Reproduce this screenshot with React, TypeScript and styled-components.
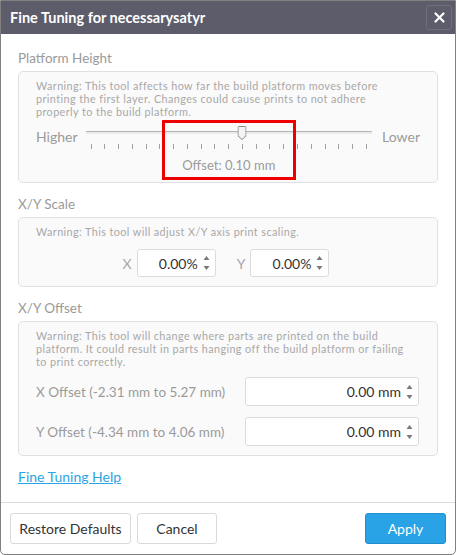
import React, {FC} from "react";
import styled, {createGlobalStyle} from "styled-components";

const GlobalStyle = createGlobalStyle`
    html, body {
        margin: 0;
        padding: 0;
        background: #ffffff;
    }
    body {
        font-family: Lato, "Open Sans", sans-serif;
    }
`;

const Modal = styled.div`
    width: 456px;
    height: 555px;
    box-sizing: border-box;
    border: 1px solid #808080;
    border-radius: 0 0 5px 5px;
    display: flex;
    flex-direction: column;
    overflow: hidden;
    background: #ffffff;
`;

const Header = styled.div`
    height: 33px;
    flex-shrink: 0;
    background: #5c5c6a;
    display: flex;
    align-items: center;
    justify-content: space-between;
    padding: 0 3px 0 9px;
`;

const Title = styled.h1`
    margin: 0;
    font-size: 14.5px;
    font-weight: 700;
    color: #ffffff;
`;

const CloseButton = styled.button`
    width: 26px;
    height: 25px;
    border: 1px solid #6f6f7d;
    border-radius: 3px;
    background: #5c5c6a;
    color: #ffffff;
    display: flex;
    align-items: center;
    justify-content: center;
    padding: 0;
`;

const Body = styled.div`
    flex: 1;
    padding: 16px 17px 0 17px;
`;

const SectionLabel = styled.div<{ $first?: boolean }>`
    font-size: 13.5px;
    line-height: 16px;
    color: #9a9a9a;
    margin-top: ${p => (p.$first ? 0 : 13)}px;
    margin-bottom: 5px;
`;

const Panel = styled.div<{ $right?: number }>`
    border: 1px solid #e0e0e0;
    border-radius: 5px;
    background: #fafafa;
    padding: 7px ${p => p.$right ?? 17}px 9px 17px;
`;

const Warning = styled.div`
    font-size: 10.8px;
    line-height: 13px;
    letter-spacing: 0.42px;
    color: #a8a8a8;
    white-space: nowrap;
`;

const SliderRow = styled.div`
    display: flex;
    align-items: flex-start;
    margin-top: 8px;
`;

const EndLabel = styled.span`
    font-size: 14px;
    line-height: 22px;
    color: #9a9a9a;
`;

const SliderArea = styled.div`
    position: relative;
    flex: 1;
    margin: 0 10px 0 8px;
`;

const TrackBox = styled.div`
    position: relative;
    height: 12px;
`;

const Track = styled.div`
    position: absolute;
    left: 0;
    right: 0;
    top: 5px;
    height: 1px;
    background: #b5b5b5;
    border-bottom: 2px solid #ebebeb;
`;

const Thumb = styled.svg`
    position: absolute;
    top: 0;
    transform: translateX(-50%);
`;

const Ticks = styled.div`
    display: flex;
    justify-content: space-between;
    padding: 0 5px;
    margin-top: 6px;
`;

const Tick = styled.span`
    width: 1px;
    height: 5px;
    background: #a0a0a0;
`;

const OffsetText = styled.div`
    text-align: center;
    font-size: 13px;
    line-height: 16px;
    color: #9a9a9a;
    margin-top: 8px;
`;

const Highlight = styled.div`
    position: absolute;
    left: 76px;
    top: -6px;
    width: 134px;
    height: 60px;
    box-sizing: border-box;
    border: 3px solid #ee0000;
    pointer-events: none;
`;

const ScaleRow = styled.div`
    display: flex;
    justify-content: center;
    align-items: center;
    margin-top: 11px;
    padding-right: 4px;
`;

const AxisLabel = styled.span`
    font-size: 14px;
    color: #a8a8a8;
    margin: 0 5px 0 0;
`;

const Spin = styled.div<{ $w: number; $h: number }>`
    width: ${p => p.$w}px;
    height: ${p => p.$h}px;
    box-sizing: border-box;
    border: 1px solid #dcdcdc;
    border-radius: 3px;
    background: #ffffff;
    display: flex;
    align-items: center;
    justify-content: flex-end;
    padding-right: 5px;
    gap: 5px;
    font-size: 14px;
    color: #333333;
`;

const AxisGroup = styled.div`
    display: flex;
    align-items: center;
    & + & {
        margin-left: 21px;
    }
`;

const OffsetRow = styled.div`
    display: flex;
    align-items: center;
    justify-content: space-between;
    margin-top: 9px;
    & + & {
        margin-top: 11px;
    }
`;

const OffsetLabel = styled.span`
    font-size: 13.5px;
    color: #9a9a9a;
`;

const HelpLink = styled.a`
    display: inline-block;
    margin-top: 13px;
    font-size: 14px;
    line-height: 16px;
    color: #2aa5e4;
    text-decoration: underline;
`;

const Footer = styled.div`
    flex-shrink: 0;
    border-top: 1px solid #dcdcdc;
    padding: 10px 9px 10px 9px;
    display: flex;
    gap: 6px;
`;

const Button = styled.button<{ $w: number; $primary?: boolean }>`
    width: ${p => p.$w}px;
    height: 31px;
    border-radius: 3px;
    border: 1px solid ${p => (p.$primary ? "#1f8fce" : "#dadada")};
    background: ${p => (p.$primary ? "#29a3e6" : "#ffffff")};
    color: ${p => (p.$primary ? "#ffffff" : "#333333")};
    font-family: Lato, "Open Sans", sans-serif;
    font-size: 14px;
    padding: 0;
    margin-left: ${p => (p.$primary ? "auto" : "0")};
`;

const Arrows: FC = () => (
    <svg width="7" height="16" viewBox="0 0 7 16">
        <path d="M3.5 1 L6.5 5 L0.5 5 Z" fill="#7a7a7a"/>
        <path d="M3.5 15 L6.5 11 L0.5 11 Z" fill="#7a7a7a"/>
    </svg>
);

const SpinBox: FC<{ value: string; w: number; h: number }> = ({value, w, h}) => (
    <Spin $w={w} $h={h}>
        <span>{value}</span>
        <Arrows/>
    </Spin>
);

const TICKS = 21;
const THUMB_POS = 0.545;

const App: FC = () => (
    <>
        <GlobalStyle/>
        <Modal>
            <Header>
                <Title>Fine Tuning for necessarysatyr</Title>
                <CloseButton aria-label="Close">
                    <svg width="11" height="11" viewBox="0 0 11 11">
                        <path d="M1.5 1.5 L9.5 9.5 M9.5 1.5 L1.5 9.5" stroke="#ffffff" strokeWidth="2.2"
                              strokeLinecap="round"/>
                    </svg>
                </CloseButton>
            </Header>
            <Body>
                <SectionLabel $first>Platform Height</SectionLabel>
                <Panel>
                    <Warning>
                        Warning: This tool affects how far the build platform moves before<br/>
                        printing the first layer. Changes could cause prints to not adhere<br/>
                        properly to the build platform.
                    </Warning>
                    <SliderRow>
                        <EndLabel>Higher</EndLabel>
                        <SliderArea>
                            <TrackBox>
                                <Track/>
                                <Thumb width="9" height="14" viewBox="0 0 9 14" style={{left: `${THUMB_POS * 100}%`}}>
                                    <path d="M1.5 0.5 H7.5 Q8.5 0.5 8.5 1.5 V10 L4.5 13.5 L0.5 10 V1.5 Q0.5 0.5 1.5 0.5 Z"
                                          fill="#f4f4f4" stroke="#8a8a8a"/>
                                </Thumb>
                            </TrackBox>
                            <Ticks>
                                {Array.from({length: TICKS}).map((_, i) => <Tick key={i}/>)}
                            </Ticks>
                            <OffsetText>Offset: 0.10 mm</OffsetText>
                            <Highlight/>
                        </SliderArea>
                        <EndLabel>Lower</EndLabel>
                    </SliderRow>
                </Panel>

                <SectionLabel>X/Y Scale</SectionLabel>
                <Panel>
                    <Warning>Warning: This tool will adjust X/Y axis print scaling.</Warning>
                    <ScaleRow>
                        <AxisGroup>
                            <AxisLabel>X</AxisLabel>
                            <SpinBox value="0.00%" w={79} h={28}/>
                        </AxisGroup>
                        <AxisGroup>
                            <AxisLabel>Y</AxisLabel>
                            <SpinBox value="0.00%" w={79} h={28}/>
                        </AxisGroup>
                    </ScaleRow>
                </Panel>

                <SectionLabel>X/Y Offset</SectionLabel>
                <Panel $right={18}>
                    <Warning>
                        Warning: This tool will change where parts are printed on the build<br/>
                        platform. It could result in parts hanging off the build platform or failing<br/>
                        to print correctly.
                    </Warning>
                    <OffsetRow>
                        <OffsetLabel>X Offset (-2.31 mm to 5.27 mm)</OffsetLabel>
                        <SpinBox value="0.00 mm" w={174} h={29}/>
                    </OffsetRow>
                    <OffsetRow>
                        <OffsetLabel>Y Offset (-4.34 mm to 4.06 mm)</OffsetLabel>
                        <SpinBox value="0.00 mm" w={174} h={29}/>
                    </OffsetRow>
                </Panel>

                <HelpLink href="#">Fine Tuning Help</HelpLink>
            </Body>
            <Footer>
                <Button $w={121}>Restore Defaults</Button>
                <Button $w={80}>Cancel</Button>
                <Button $w={81} $primary>Apply</Button>
            </Footer>
        </Modal>
    </>
);

export default App;
